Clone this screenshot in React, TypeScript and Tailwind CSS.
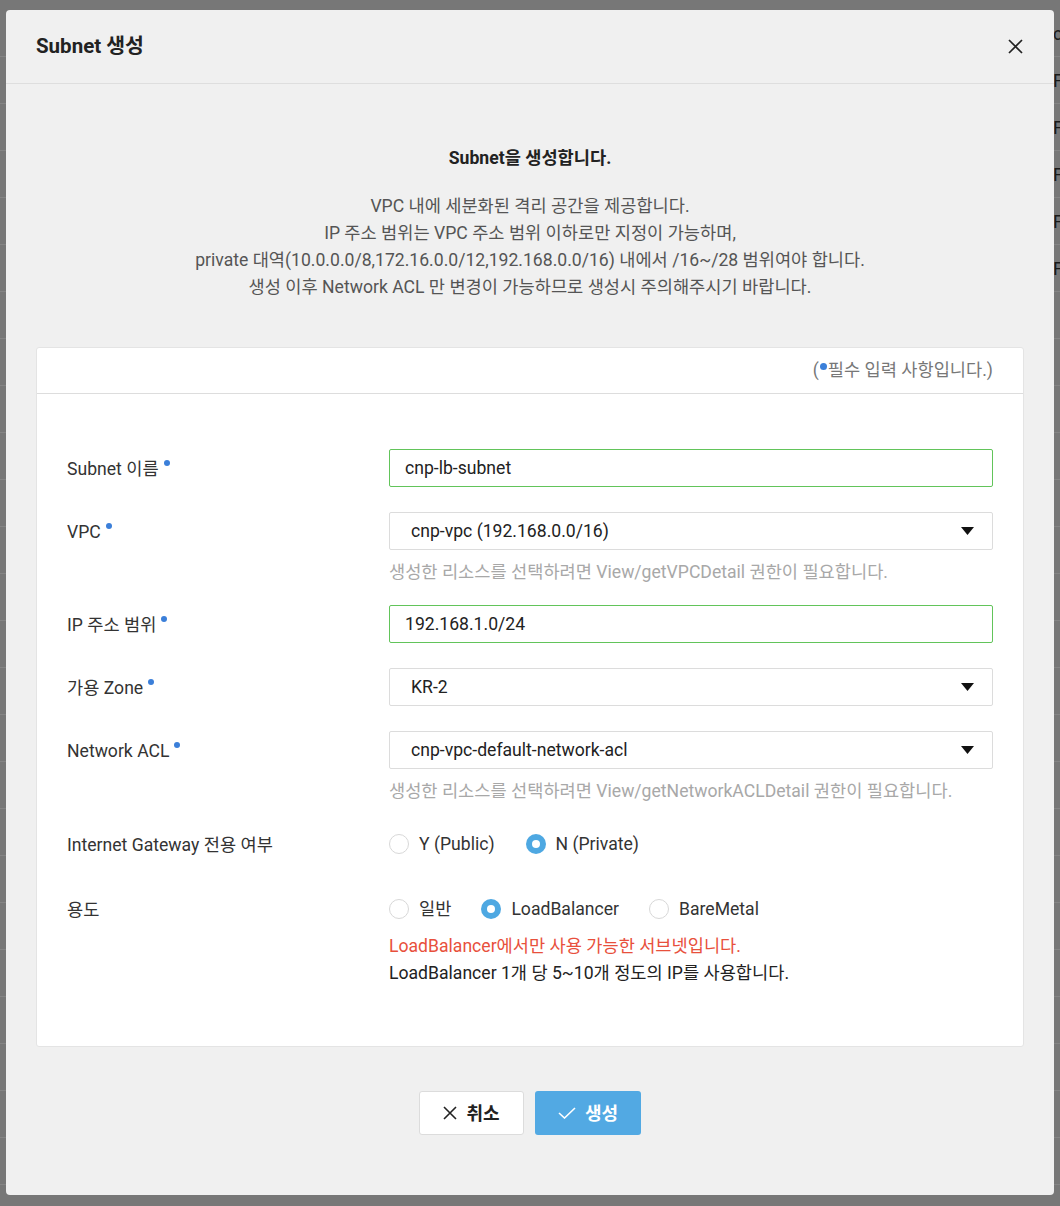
import React from 'react'

const font = "font-['Roboto','Noto_Sans_CJK_KR',sans-serif]"

function Req() {
  return <span className="inline-block w-[6px] h-[6px] rounded-full bg-[#3b7fd9] ml-[5px] relative -top-[7px]" />
}

function Label({ text, req, h = 'h-[38px]' }: { text: string; req?: boolean; h?: string }) {
  return (
    <div className={`w-[322px] shrink-0 flex items-center ${h} pt-[3px] text-[17.6px] text-[#333]`}>
      <span>{text}</span>
      {req && <Req />}
    </div>
  )
}

function TextInput({ value }: { value: string }) {
  return (
    <div className="h-[38px] border border-[#62c45a] rounded-[2px] bg-white flex items-center pl-[15px] text-[17.6px] text-[#222]">
      {value}
    </div>
  )
}

function Select({ value }: { value: string }) {
  return (
    <div className="h-[38px] border border-[#dcdcdc] rounded-[2px] bg-white flex items-center justify-between pl-[21px] pr-[18px] text-[17.6px] text-[#222]">
      <span>{value}</span>
      <svg width="13" height="8" viewBox="0 0 13 8">
        <path d="M0 0 L13 0 L6.5 8 Z" fill="#111" />
      </svg>
    </div>
  )
}

function Radio({ label, checked }: { label: string; checked?: boolean }) {
  return (
    <label className="flex items-center h-[24px] text-[17.6px] text-[#333]">
      {checked ? (
        <span className="w-[20px] h-[20px] rounded-full bg-[#4ea8e2] flex items-center justify-center">
          <span className="w-[8px] h-[8px] rounded-full bg-white" />
        </span>
      ) : (
        <span className="w-[20px] h-[20px] rounded-full border border-[#d8d8d8] bg-white" />
      )}
      <span className="ml-[10px]">{label}</span>
    </label>
  )
}

function Help({ text }: { text: string }) {
  return <p className="mt-[11px] leading-[22px] text-[17.6px] text-[#a8a8a8]">{text}</p>
}

export default function App() {
  const bgRows = ['c', 'F', 'F', 'F', 'F', 'F', '', '', '', '', '', '', '', '', '', '', '', '', '', '', '', '', '', '', '']
  return (
    <div className={`relative w-[1060px] h-[1206px] bg-[#777] overflow-hidden ${font}`}>
      {/* page behind the dialog */}
      <div className="pt-[10px]">
        {bgRows.map((t, i) => (
          <div key={i} className="h-[47px] border-b border-[#858585] flex items-center">
            <span className="ml-[1053px] text-[18px] text-[#1a1a1a]">{t}</span>
          </div>
        ))}
      </div>

      {/* dialog */}
      <div className="absolute left-[6px] top-[10px] w-[1048px] h-[1185px] bg-[#f0f0f0] rounded-[4px] flex flex-col">
        <div className="h-[74px] shrink-0 border-b border-[#dedede] flex items-center justify-between pl-[30px] pr-[31px]">
          <h1 className="text-[20.5px] font-bold text-[#222]">Subnet 생성</h1>
          <svg width="15" height="15" viewBox="0 0 15 15">
            <path d="M1 1 L14 14 M14 1 L1 14" stroke="#222" strokeWidth="1.7" />
          </svg>
        </div>

        <div className="px-[30px] pt-[62px]">
          <p className="text-center font-bold text-[17.6px] leading-[24px] text-[#222]">Subnet을 생성합니다.</p>
          <div className="mt-[23px] text-center text-[17.6px] leading-[27px] text-[#555]">
            <p>VPC 내에 세분화된 격리 공간을 제공합니다.</p>
            <p>IP 주소 범위는 VPC 주소 범위 이하로만 지정이 가능하며,</p>
            <p>private 대역(10.0.0.0/8,172.16.0.0/12,192.168.0.0/16) 내에서 /16~/28 범위여야 합니다.</p>
            <p>생성 이후 Network ACL 만 변경이 가능하므로 생성시 주의해주시기 바랍니다.</p>
          </div>

          <div className="mt-[46px] bg-white border border-[#e4e4e4] rounded-[3px]">
            <div className="h-[46px] border-b border-[#dddddd] flex items-center justify-end pr-[30px] text-[17.6px] text-[#777]">
              (<span className="inline-block w-[7px] h-[7px] rounded-full bg-[#3b7fd9] relative -top-[4px] mx-[1px]" />필수 입력 사항입니다.)
            </div>

            <div className="px-[30px] pt-[55px] pb-[59px]">
              <div className="flex mb-[25px]">
                <Label text="Subnet 이름" req />
                <div className="flex-1">
                  <TextInput value="cnp-lb-subnet" />
                </div>
              </div>

              <div className="flex mb-[22px]">
                <Label text="VPC" req />
                <div className="flex-1">
                  <Select value="cnp-vpc (192.168.0.0/16)" />
                  <Help text="생성한 리소스를 선택하려면 View/getVPCDetail 권한이 필요합니다." />
                </div>
              </div>

              <div className="flex mb-[25px]">
                <Label text="IP 주소 범위" req />
                <div className="flex-1">
                  <TextInput value="192.168.1.0/24" />
                </div>
              </div>

              <div className="flex mb-[25px]">
                <Label text="가용 Zone" req />
                <div className="flex-1">
                  <Select value="KR-2" />
                </div>
              </div>

              <div className="flex mb-[30px]">
                <Label text="Network ACL" req />
                <div className="flex-1">
                  <Select value="cnp-vpc-default-network-acl" />
                  <Help text="생성한 리소스를 선택하려면 View/getNetworkACLDetail 권한이 필요합니다." />
                </div>
              </div>

              <div className="flex mb-[41px]">
                <Label text="Internet Gateway 전용 여부" h="h-[24px]" />
                <div className="flex-1 flex gap-[31px]">
                  <Radio label="Y (Public)" />
                  <Radio label="N (Private)" checked />
                </div>
              </div>

              <div className="flex">
                <Label text="용도" h="h-[24px]" />
                <div className="flex-1">
                  <div className="flex gap-[30px]">
                    <Radio label="일반" />
                    <Radio label="LoadBalancer" checked />
                    <Radio label="BareMetal" />
                  </div>
                  <div className="mt-[12px] text-[17.6px] leading-[27px]">
                    <p className="text-[#e8503c]">LoadBalancer에서만 사용 가능한 서브넷입니다.</p>
                    <p className="text-[#222]">LoadBalancer 1개 당 5~10개 정도의 IP를 사용합니다.</p>
                  </div>
                </div>
              </div>
            </div>
          </div>

          <div className="mt-[44px] flex justify-center gap-[11px]">
            <button className="w-[105px] h-[44px] bg-white border border-[#dcdcdc] rounded-[3px] flex items-center justify-center gap-[9px] text-[18px] font-bold text-[#222]">
              <svg width="14" height="14" viewBox="0 0 14 14">
                <path d="M1 1 L13 13 M13 1 L1 13" stroke="#222" strokeWidth="1.6" />
              </svg>
              취소
            </button>
            <button className="w-[106px] h-[44px] bg-[#52a9e3] rounded-[3px] flex items-center justify-center gap-[9px] text-[18px] font-bold text-white">
              <svg width="18" height="12" viewBox="0 0 18 12">
                <path d="M1 6 L6.5 11 L17 1" stroke="#fff" strokeWidth="1.6" fill="none" />
              </svg>
              생성
            </button>
          </div>
        </div>
      </div>
    </div>
  )
}
